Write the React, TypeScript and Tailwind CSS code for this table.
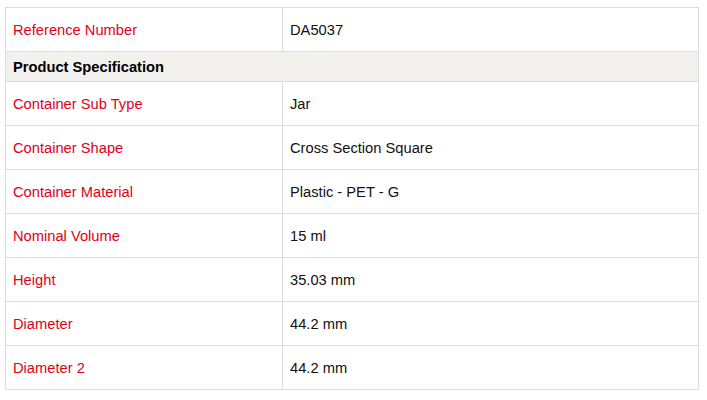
import React from 'react';

const rows: [string, string][] = [
  ['Container Sub Type', 'Jar'],
  ['Container Shape', 'Cross Section Square'],
  ['Container Material', 'Plastic - PET - G'],
  ['Nominal Volume', '15 ml'],
  ['Height', '35.03 mm'],
  ['Diameter', '44.2 mm'],
  ['Diameter 2', '44.2 mm'],
];

const App: React.FC = () => {
  return (
    <div className="w-[707px] h-[400px] bg-white pl-[5px] pt-[7px] font-['Liberation_Sans',Arial,sans-serif] text-[14.7px]">
      <table className="w-[694px] border-collapse">
        <tbody>
          <tr className="h-[44px]">
            <td className="w-[277px] border border-[#dddddd] px-[7px] pt-[2px] text-[#e2001a]">Reference Number</td>
            <td className="border border-[#dddddd] px-[7px] pt-[2px] text-[#111]">DA5037</td>
          </tr>
          <tr className="h-[30px] bg-[#f2f1ee]">
            <td colSpan={2} className="border border-[#dddddd] px-[7px] pt-[1px] font-bold text-black">
              Product Specification
            </td>
          </tr>
          {rows.map(([label, value]) => (
            <tr key={label} className="h-[44px]">
              <td className="w-[277px] border border-[#dddddd] px-[7px] pt-[2px] text-[#e2001a]">{label}</td>
              <td className="border border-[#dddddd] px-[7px] pt-[2px] text-[#111]">{value}</td>
            </tr>
          ))}
        </tbody>
      </table>
    </div>
  );
};

export default App;
